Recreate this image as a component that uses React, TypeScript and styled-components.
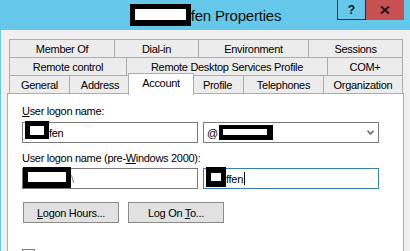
import React from 'react';
import styled, { createGlobalStyle, css } from 'styled-components';

const Global = createGlobalStyle`
  html, body { margin: 0; padding: 0; background: #f0f0f0; }
  body {
    width: 410px; height: 251px; overflow: hidden;
    font-family: "Liberation Sans", Arial, sans-serif;
    -webkit-font-smoothing: antialiased;
  }
`;

const CYAN = '#65c8ea';

const Window = styled.div`
  width: 410px;
  height: 251px;
  box-sizing: border-box;
  border-left: 1px solid ${CYAN};
  background: #f0f0f0;
  display: flex;
  flex-direction: column;
  overflow: hidden;
`;

const TitleBar = styled.div`
  flex: none;
  height: 30px;
  background: ${CYAN};
  display: grid;
  grid-template-columns: 1fr auto 1fr;
  align-items: start;
`;

const Title = styled.div`
  grid-column: 2;
  height: 30px;
  display: flex;
  align-items: center;
  font-size: 15px;
  letter-spacing: -0.2px;
  color: #111;
  white-space: nowrap;
`;

const Controls = styled.div`
  grid-column: 3;
  justify-self: end;
  display: flex;
  margin-right: 6px;
`;

const HelpButton = styled.div`
  width: 29px;
  height: 20px;
  box-sizing: border-box;
  border: 1px solid #2a2a2a;
  border-top: none;
  display: flex;
  align-items: center;
  justify-content: center;
  font-weight: bold;
  font-size: 12px;
  color: #111;
`;

const CloseButton = styled.div`
  width: 38px;
  height: 20px;
  background: #c75050;
  display: flex;
  align-items: center;
  justify-content: center;
`;

const Content = styled.div`
  flex: 1;
  display: flex;
  flex-direction: column;
  padding: 9px 0 0 6px;
  min-height: 0;
`;

const TabRow = styled.div`
  display: flex;
  align-items: flex-end;
  margin-left: 2px;
  & + & { margin-top: -1px; }
`;

const Tab = styled.div<{ $w: number; $active?: boolean }>`
  box-sizing: border-box;
  flex: none;
  width: ${(p) => p.$w}px;
  height: 19px;
  margin-left: -1px;
  &:first-child { margin-left: 0; }
  border: 1px solid #acacac;
  background: #ececec;
  display: flex;
  align-items: center;
  justify-content: center;
  font-size: 11px;
  letter-spacing: -0.3px;
  color: #000;
  white-space: nowrap;
  ${(p) =>
    p.$active &&
    css`
      position: relative;
      z-index: 1;
      width: ${p.$w + 4}px;
      height: 22px;
      margin: -2px -2px -1px -3px;
      background: #fff;
      border-bottom: none;
      padding-bottom: 4px;
    `}
`;

const Panel = styled.div`
  flex: 1;
  width: 397px;
  box-sizing: border-box;
  margin-top: -1px;
  background: #fff;
  border: 1px solid #acacac;
  border-bottom: none;
  padding: 11px 0 0 14px;
  display: flex;
  flex-direction: column;
`;

const Label = styled.div<{ $mt?: number }>`
  font-size: 11px;
  line-height: 13px;
  letter-spacing: -0.3px;
  color: #000;
  margin-top: ${(p) => p.$mt ?? 0}px;
  white-space: nowrap;
`;

const FieldRow = styled.div<{ $mt: number }>`
  display: flex;
  gap: 5px;
  margin-top: ${(p) => p.$mt}px;
`;

const Field = styled.div<{ $focused?: boolean; $pl?: number }>`
  box-sizing: border-box;
  width: 176px;
  height: 21px;
  border: 1px solid ${(p) => (p.$focused ? '#3c7fb1' : '#7a7a7a')};
  background: #fff;
  display: flex;
  align-items: center;
  padding-left: ${(p) => p.$pl ?? 2}px;
  font-size: 11px;
  letter-spacing: -0.3px;
  color: #000;
  white-space: nowrap;
`;

const Muted = styled.span`
  color: #6d6d6d;
`;

const Caret = styled.span`
  display: inline-block;
  width: 1px;
  height: 13px;
  background: #000;
  margin-left: 1px;
`;

const Chevron = styled.svg`
  margin-left: auto;
  margin-right: 4px;
  flex: none;
`;

const Redact = styled.span<{
  $w: number;
  $h: number;
  $b: [number, number, number, number];
  $mt?: number;
  $ml?: number;
}>`
  display: inline-block;
  flex: none;
  box-sizing: border-box;
  width: ${(p) => p.$w}px;
  height: ${(p) => p.$h}px;
  background: #fff;
  border-style: solid;
  border-color: #000;
  border-width: ${(p) => p.$b.map((v) => `${v}px`).join(' ')};
  align-self: flex-start;
  margin-top: ${(p) => p.$mt ?? 0}px;
  margin-left: ${(p) => p.$ml ?? 0}px;
`;

const TitleRedact = styled(Redact)`
  align-self: auto;
`;

const ButtonRow = styled.div`
  display: flex;
  gap: 9px;
  margin-top: 13px;
  margin-left: 1px;
`;

const Button = styled.div`
  box-sizing: border-box;
  width: 96px;
  height: 21px;
  background: #e1e1e1;
  border: 1px solid #8a8a8a;
  display: flex;
  align-items: center;
  justify-content: center;
  font-size: 11px;
  letter-spacing: -0.3px;
  color: #000;
  white-space: nowrap;
`;

const CheckBox = styled.div`
  box-sizing: border-box;
  width: 13px;
  height: 13px;
  margin-top: 26px;
  border: 1px solid #7a7a7a;
  background: #fff;
`;

const rows: { label: string; w: number; active?: boolean }[][] = [
  [
    { label: 'Member Of', w: 106 },
    { label: 'Dial-in', w: 85 },
    { label: 'Environment', w: 111 },
    { label: 'Sessions', w: 95 },
  ],
  [
    { label: 'Remote control', w: 118 },
    { label: 'Remote Desktop Services Profile', w: 202 },
    { label: 'COM+', w: 76 },
  ],
  [
    { label: 'General', w: 61 },
    { label: 'Address', w: 62 },
    { label: 'Account', w: 62, active: true },
    { label: 'Profile', w: 53 },
    { label: 'Telephones', w: 81 },
    { label: 'Organization', w: 80 },
  ],
];

export default function App() {
  return (
    <>
      <Global />
      <Window>
        <TitleBar>
          <Title>
            <TitleRedact $w={61} $h={22} $b={[5, 5, 6, 5]} />
            <span>fen Properties</span>
          </Title>
          <Controls>
            <HelpButton>?</HelpButton>
            <CloseButton>
              <svg width="10" height="8" viewBox="0 0 10 8">
                <path d="M1 0.5 L9 7.5 M9 0.5 L1 7.5" stroke="#1a1a1a" strokeWidth="2" fill="none" />
              </svg>
            </CloseButton>
          </Controls>
        </TitleBar>
        <Content>
          {rows.map((row, i) => (
            <TabRow key={i}>
              {row.map((t) => (
                <Tab key={t.label} $w={t.w} $active={t.active}>
                  {t.label}
                </Tab>
              ))}
            </TabRow>
          ))}
          <Panel>
            <Label>
              <u>U</u>ser logon name:
            </Label>
            <FieldRow $mt={4}>
              <Field>
                <Redact $w={24} $h={18} $b={[5, 5, 4, 5]} $mt={-2} />
                <span>fen</span>
              </Field>
              <Field $pl={3}>
                <span>@</span>
                <Redact $w={54} $h={15} $b={[4, 6, 5, 4]} $mt={2} $ml={1} />
                <Chevron width="7" height="5" viewBox="0 0 7 5">
                  <path d="M0.5 0.8 L3.5 3.8 L6.5 0.8" stroke="#6d6d6d" strokeWidth="1.6" fill="none" />
                </Chevron>
              </Field>
            </FieldRow>
            <Label $mt={9}>
              User logon name (pre-<u>W</u>indows 2000):
            </Label>
            <FieldRow $mt={3}>
              <Field $pl={0}>
                <Redact $w={48} $h={21} $b={[5, 5, 6, 5]} $mt={-2} />
                <Muted>\</Muted>
              </Field>
              <Field $focused>
                <Redact $w={20} $h={20} $b={[6, 5, 6, 5]} $mt={-2} />
                <span>ffen</span>
                <Caret />
              </Field>
            </FieldRow>
            <ButtonRow>
              <Button>
                <span>
                  <u>L</u>ogon Hours...
                </span>
              </Button>
              <Button>
                <span>
                  Log On <u>T</u>o...
                </span>
              </Button>
            </ButtonRow>
            <CheckBox />
          </Panel>
        </Content>
      </Window>
    </>
  );
}
